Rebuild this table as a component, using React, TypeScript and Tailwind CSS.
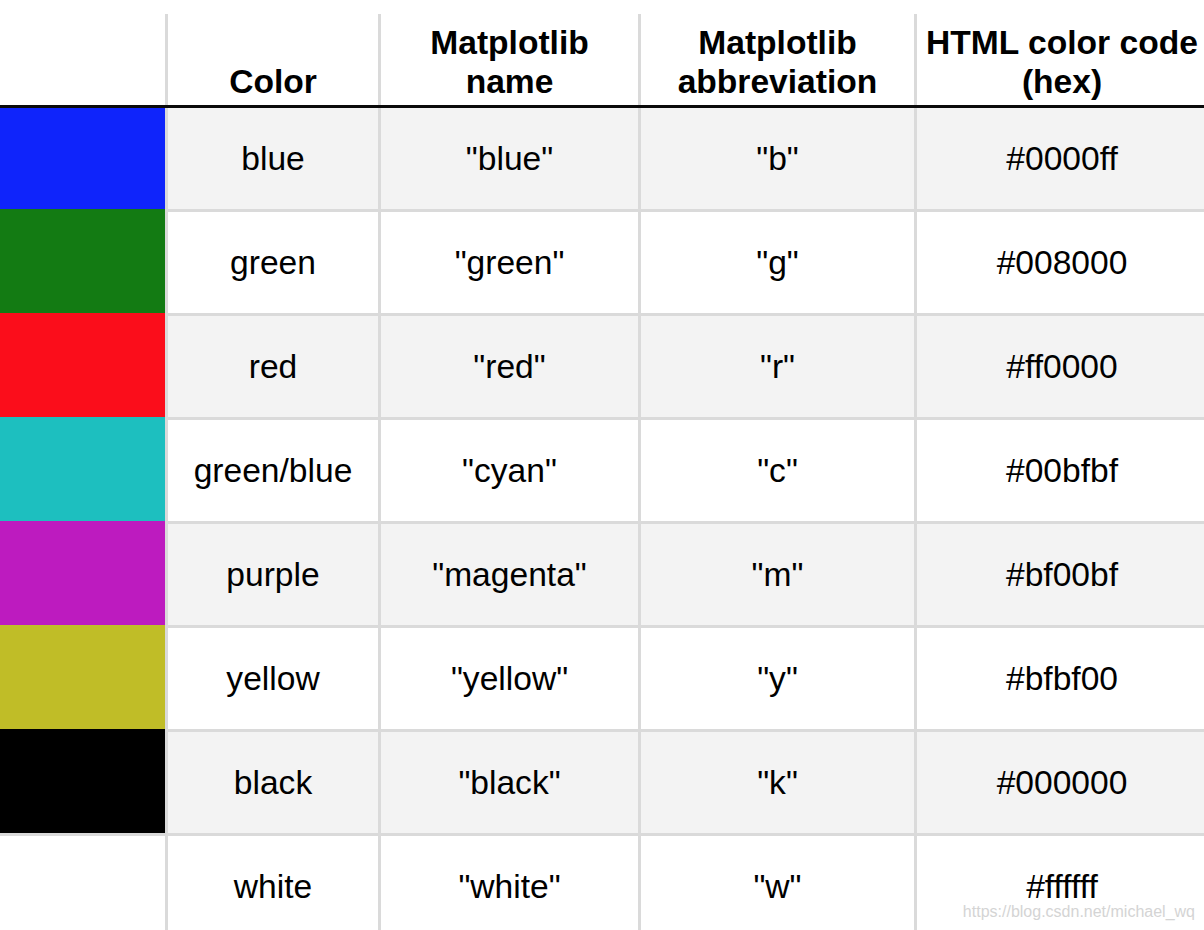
import React from 'react';

type ColorRow = {
  swatch: string;
  label: string;
  name: string;
  abbr: string;
  hex: string;
};

const rows: ColorRow[] = [
  { swatch: 'bg-[#0f24fb]', label: 'blue', name: '"blue"', abbr: '"b"', hex: '#0000ff' },
  { swatch: 'bg-[#137b13]', label: 'green', name: '"green"', abbr: '"g"', hex: '#008000' },
  { swatch: 'bg-[#fb0d1b]', label: 'red', name: '"red"', abbr: '"r"', hex: '#ff0000' },
  { swatch: 'bg-[#1dbfbf]', label: 'green/blue', name: '"cyan"', abbr: '"c"', hex: '#00bfbf' },
  { swatch: 'bg-[#bd1bbf]', label: 'purple', name: '"magenta"', abbr: '"m"', hex: '#bf00bf' },
  { swatch: 'bg-[#c0bd27]', label: 'yellow', name: '"yellow"', abbr: '"y"', hex: '#bfbf00' },
  { swatch: 'bg-[#000000]', label: 'black', name: '"black"', abbr: '"k"', hex: '#000000' },
  { swatch: 'bg-white', label: 'white', name: '"white"', abbr: '"w"', hex: '#ffffff' },
];

// widths of the four text columns incl. their 3px left rule (the swatch column is 165px)
const cols = ['w-[213px]', 'w-[260px]', 'w-[276px]', 'w-[293px]'];

const HeaderCell: React.FC<{ width: string; lines: string[] }> = ({ width, lines }) => (
  <div
    className={`${width} shrink-0 h-[91px] border-l-[3px] border-[#dadada] flex flex-col justify-end items-center pb-[4px] font-bold text-[33.6px] leading-[39px]`}
  >
    {lines.map((l) => (
      <span key={l} className="whitespace-nowrap">{l}</span>
    ))}
  </div>
);

const App: React.FC = () => {
  return (
    <div
      className="relative w-[1204px] h-[930px] overflow-hidden bg-white text-black"
      style={{ fontFamily: '"Liberation Sans", Arial, sans-serif' }}
    >
      {/* header */}
      <div className="flex items-end h-[105px] w-[1210px]">
        <div className="w-[165px] shrink-0" />
        <HeaderCell width={cols[0]} lines={['Color']} />
        <HeaderCell width={cols[1]} lines={['Matplotlib', 'name']} />
        <HeaderCell width={cols[2]} lines={['Matplotlib', 'abbreviation']} />
        <HeaderCell width={cols[3]} lines={['HTML color code', '(hex)']} />
      </div>
      <div className="h-[3px] w-[1210px] bg-[#0a0a0a]" />

      {/* body */}
      {rows.map((r, i) => {
        const first = i === 0;
        const bg = i % 2 === 0 ? 'bg-[#f3f3f3]' : 'bg-white';
        const top = first ? 'h-[101px]' : 'h-[104px] border-t-[3px] border-t-[#dadada]';
        const values = [r.label, r.name, r.abbr, r.hex];
        return (
          <div key={r.label} className={`flex w-[1210px] ${bg}`}>
            <div
              className={`w-[165px] shrink-0 ${r.swatch} ${
                first ? 'h-[101px]' : r.label === 'white' ? 'h-[104px] border-t-[3px] border-t-[#dadada]' : 'h-[104px]'
              }`}
            />
            {values.map((v, j) => (
              <div
                key={j}
                className={`${cols[j]} shrink-0 ${top} border-l-[3px] border-l-[#dadada] flex items-center justify-center text-[33.6px] leading-none whitespace-nowrap`}
              >
                {v}
              </div>
            ))}
          </div>
        );
      })}

      <div className="absolute right-[9px] top-[904px] text-[16px] leading-[16px] text-[#d4d4d4]">
        https://blog.csdn.net/michael_wq
      </div>
    </div>
  );
};

export default App;
